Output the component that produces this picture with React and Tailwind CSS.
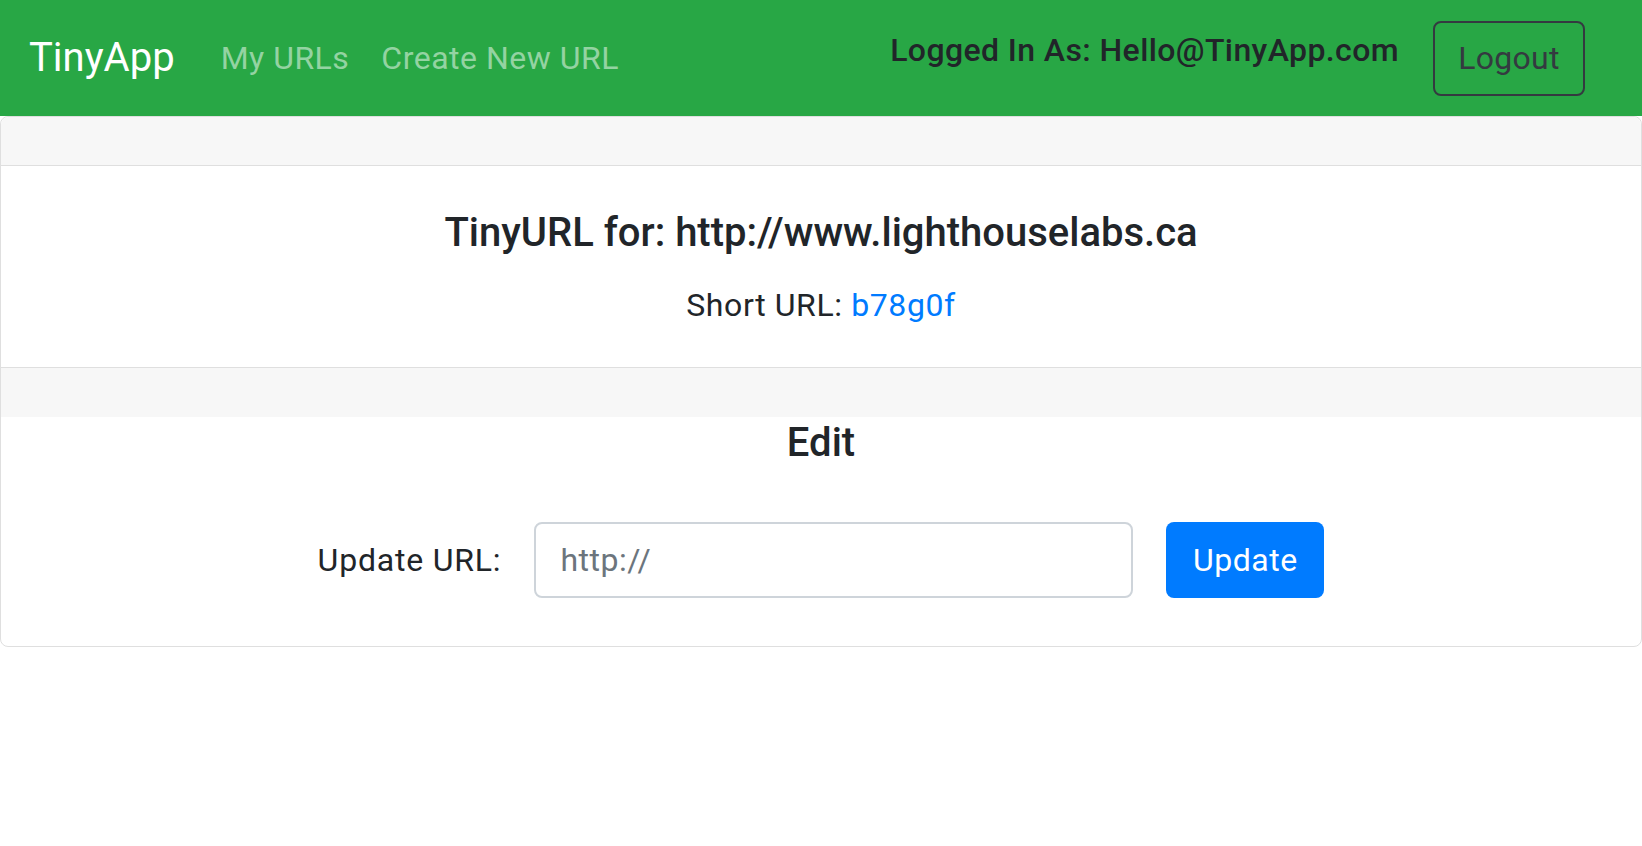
import React from "react";

export default function App() {
  return (
    <div
      className="min-h-[846px] w-full bg-white text-[#212529]"
      style={{ fontFamily: "Roboto, 'Liberation Sans', sans-serif" }}
    >
      {/* Navbar */}
      <nav className="flex h-[116px] items-center bg-[#28a745] pl-[29px] pr-[57px]">
        <a className="text-[40px] leading-[60px] text-white">TinyApp</a>
        <div className="ml-[30px] flex items-center">
          <a className="px-[16px] text-[32px] leading-[48px] tracking-[0.5px] text-[#94d3a2]">My URLs</a>
          <a className="px-[16px] text-[32px] leading-[48px] tracking-[0.5px] text-[#94d3a2]">Create New URL</a>
        </div>
        <div className="ml-auto flex items-center">
          <h6 className="mb-[16px] text-[32px] font-medium leading-[38px] tracking-[0.4px] text-[#212529]">
            Logged In As: Hello@TinyApp.com
          </h6>
          <button className="ml-[34px] h-[75px] w-[152px] rounded-[8px] border-2 border-[#343a40] text-[32px] leading-[48px] tracking-[0.3px] text-[#343a40]">
            Logout
          </button>
        </div>
      </nav>

      {/* Card */}
      <div className="rounded-[8px] border border-[#dfdfdf]">
        <div className="h-[49px] rounded-t-[8px] border-b border-[#dfdfdf] bg-[#f7f7f7]" />
        <div className="flex h-[201px] flex-col items-center pt-[43px]">
          <h4 className="text-[40px] font-medium leading-[48px] text-[#212529]">
            TinyURL for: http://www.lighthouselabs.ca
          </h4>
          <p className="mt-[24px] text-[32px] leading-[48px] tracking-[0.6px] text-[#212529]">
            Short URL: <a className="text-[#007bff]">b78g0f</a>
          </p>
        </div>
        <div className="h-[50px] border-t border-[#dfdfdf] bg-[#f7f7f7]" />
        <div className="flex h-[229px] flex-col items-center pt-[2px]">
          <h3 className="text-[40px] font-medium leading-[48px] text-[#212529]">Edit</h3>
          <form className="mt-[55px] flex items-center">
            <label className="text-[32px] leading-[48px] tracking-[0.8px] text-[#212529]">Update URL:</label>
            <input
              type="text"
              placeholder="http://"
              className="ml-[33px] h-[76px] w-[599px] rounded-[8px] border-2 border-[#ced4da] px-[24px] text-[32px] tracking-[0.5px] text-[#495057] outline-none placeholder:text-[#6c757d]"
            />
            <button
              type="button"
              className="ml-[33px] h-[76px] w-[158px] rounded-[8px] bg-[#007bff] text-[32px] leading-[48px] tracking-[0.5px] text-white"
            >
              Update
            </button>
          </form>
        </div>
      </div>
    </div>
  );
}
